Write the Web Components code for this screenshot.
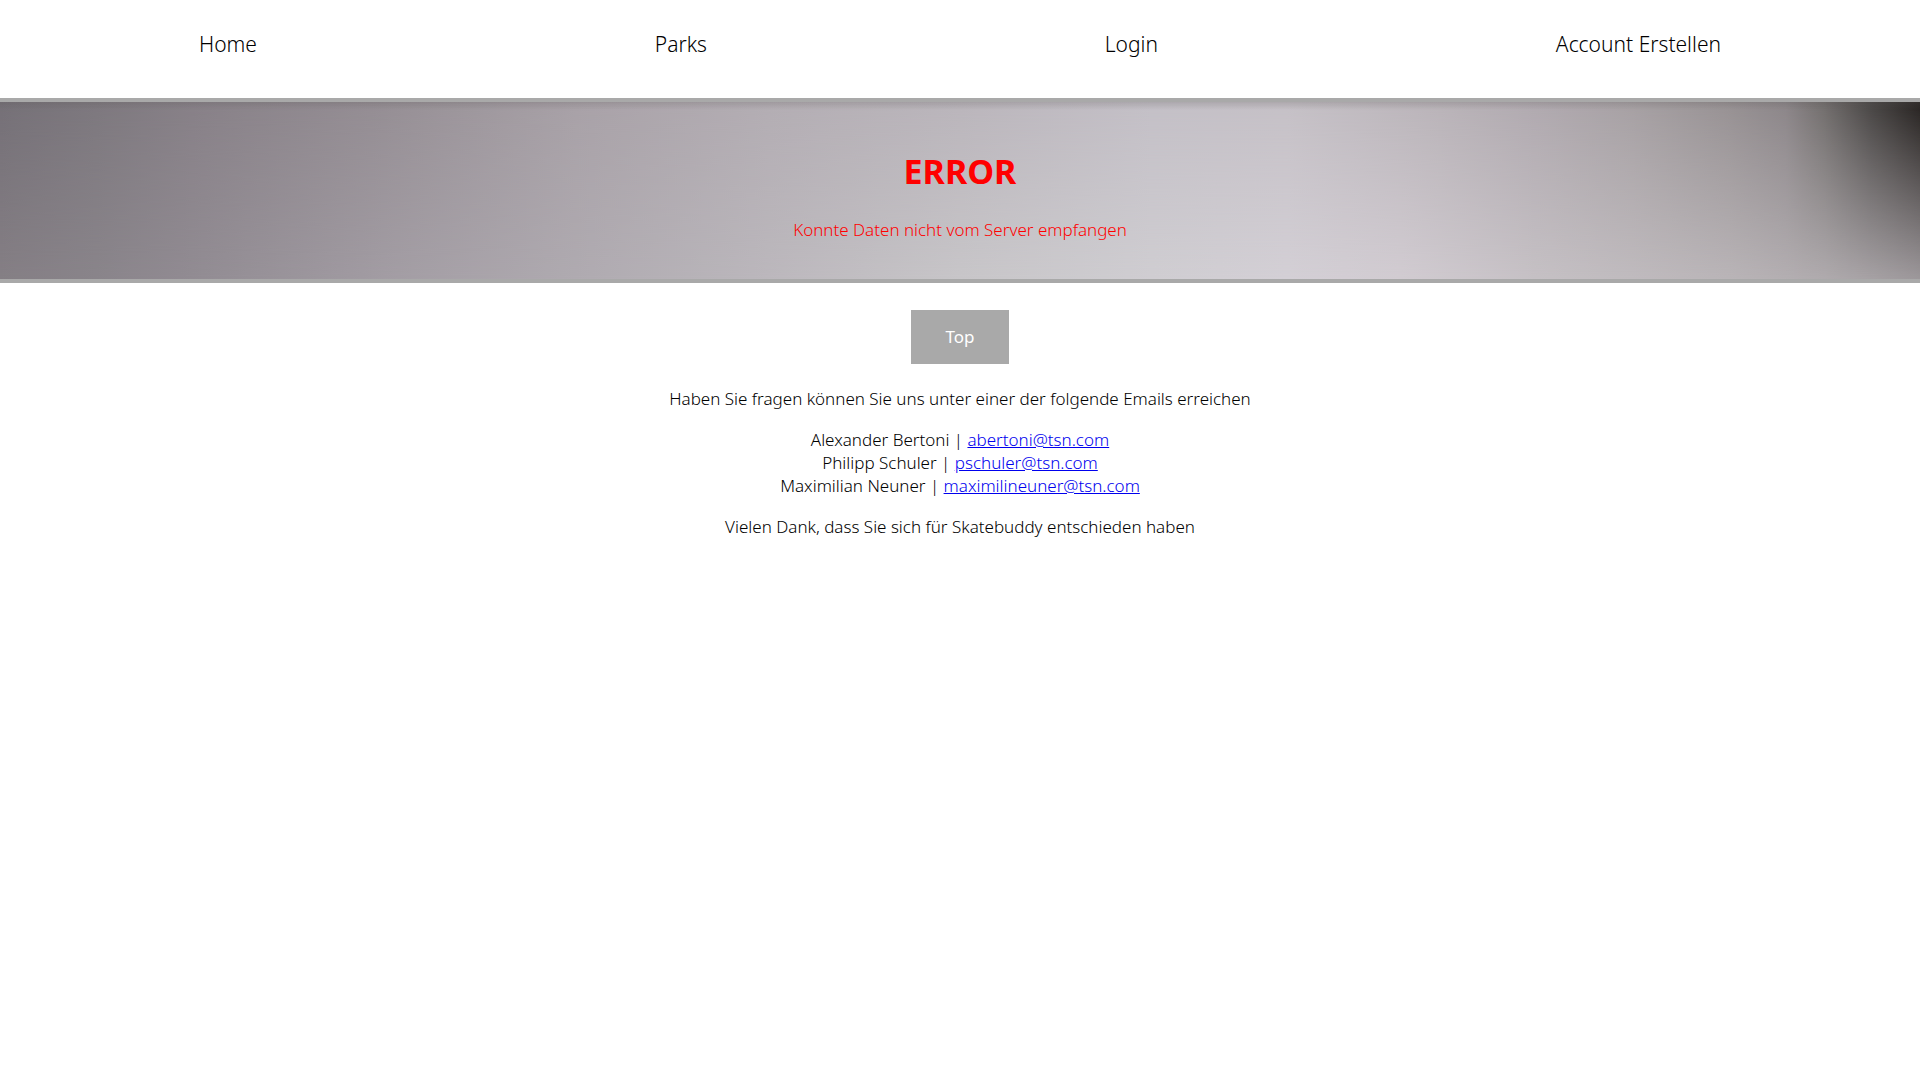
<!DOCTYPE html>
<html lang="de">
<head>
<meta charset="utf-8">
<title>Skatebuddy</title>
<style>
body { margin: 0; background: #fff; color: #000; font: 300 17px/23px "Noto Sans", sans-serif; }
</style>
</head>
<body>
<site-header>
  <nav-link href="#home">Home</nav-link>
  <nav-link href="#parks">Parks</nav-link>
  <nav-link href="#login">Login</nav-link>
  <nav-link href="#account">Account Erstellen</nav-link>
</site-header>
<error-banner heading="ERROR">Konnte Daten nicht vom Server empfangen</error-banner>
<site-footer>
  <contact-line name="Alexander Bertoni" email="abertoni@tsn.com"></contact-line>
  <contact-line name="Philipp Schuler" email="pschuler@tsn.com"></contact-line>
  <contact-line name="Maximilian Neuner" email="maximilineuner@tsn.com"></contact-line>
</site-footer>
<script>
class Base extends HTMLElement {
  constructor() {
    super();
    this.attachShadow({ mode: 'open' }).innerHTML = this.render();
  }
}

customElements.define('site-header', class extends Base {
  render() {
    return `<style>
      :host { display: block; border-bottom: 4px solid #a9a9a9; }
      nav { display: flex; justify-content: space-around; padding: 30px 0 40px; }
    </style><nav><slot></slot></nav>`;
  }
});

customElements.define('nav-link', class extends Base {
  render() {
    return `<style>
      :host { display: block; }
      a { display: block; color: #000; text-decoration: none; font-size: 21px; line-height: 28px; }
    </style><a href="${this.getAttribute('href')}"><slot></slot></a>`;
  }
});

customElements.define('error-banner', class extends Base {
  render() {
    return `<style>
      :host {
        display: block; position: relative; isolation: isolate;
        border-bottom: 4px solid #a9a9a9; padding: 45px 0 38px;
        text-align: center; color: #f00;
        background: linear-gradient(90deg, #857f85, #8a858b 5%, #928c93 10%, #a39da4 20%, #b0abb1 30%,
          #bcb8bd 40%, #c8c6c9 50%, #d0ced2 60%, #d4d0d6 67%, #d2ccd2 73%, #c6c1c5 80%, #bab5b8 90%,
          #b0abae 95%, #9d989b);
      }
      /* darker upper edge of the backdrop, fading into the lower tones */
      :host::before {
        content: ""; position: absolute; inset: 0; z-index: -1;
        background:
          linear-gradient(rgba(90, 85, 85, .22), transparent 8px),
          linear-gradient(90deg, #757077, #7d787e 5%, #878087 10%, #958e94 20%, #a8a1a7 30%, #b3adb3 40%,
            #bab5bb 50%, #c3bfc6 60%, #c5c0c6 67%, #b9b3b8 75%, #b0a9af 80%, #a6a0a3 85%, #979193 90%,
            #8b8588 93%, #716d6c 95%, #474443 97.5%, #262220);
        -webkit-mask-image: linear-gradient(#000, transparent);
        mask-image: linear-gradient(#000, transparent);
      }
      h1 { margin: 0 0 23px; font-size: 34px; line-height: 48px; font-weight: 700; }
      p { margin: 0; }
    </style><h1>${this.getAttribute('heading')}</h1><p><slot></slot></p>`;
  }
});

customElements.define('site-footer', class extends Base {
  render() {
    return `<style>
      :host { display: flex; flex-direction: column; align-items: center; gap: 18px; padding: 27px 0; text-align: center; }
      button {
        margin-bottom: 5px; padding: 15px 34px; border: 0; background: #a9a9a9; color: #fff;
        font: 400 17px/24px "Noto Sans", sans-serif; cursor: pointer;
      }
      p { margin: 0; }
    </style>
    <button type="button">Top</button>
    <p>Haben Sie fragen können Sie uns unter einer der folgende Emails erreichen</p>
    <div><slot></slot></div>
    <p>Vielen Dank, dass Sie sich für Skatebuddy entschieden haben</p>`;
  }
  connectedCallback() {
    this.shadowRoot.querySelector('button').onclick = () => window.scrollTo(0, 0);
  }
});

customElements.define('contact-line', class extends Base {
  render() {
    const mail = this.getAttribute('email');
    return `<style>
      :host { display: block; }
      a { color: #00e; text-decoration: underline; }
    </style>${this.getAttribute('name')} | <a href="mailto:${mail}">${mail}</a>`;
  }
});
</script>
</body>
</html>
